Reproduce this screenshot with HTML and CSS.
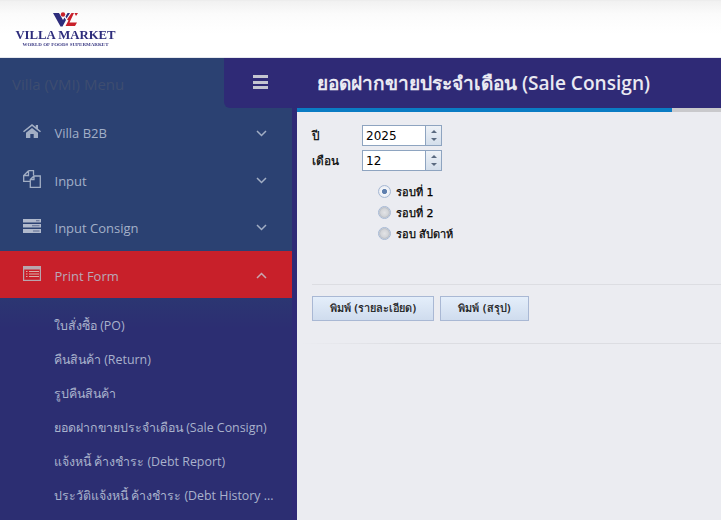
FILE: index.html
```html
<!DOCTYPE html>
<html lang="th">
<head>
<meta charset="utf-8">
<title>Sale Consign</title>
<link rel="stylesheet" href="styles.css">
</head>
<body>
<header class="top">
  <div class="logo">
    <svg class="logo-mark" width="26" height="15" viewBox="0 0 26 15">
      <path fill="#2e2d7c" d="M0 1h6l4 7 1.500-2.500L13 8l-3.500 6.500h-2z"/>
      <circle cx="10" cy="2.500" r="2.200" fill="#c8202a"/>
      <path fill="#c8202a" d="M14 7.500 18.500 1H21l-4.500 9.500H24l-2 3.500H12.500l3-5.500zM21.500 1H25l-2 3z"/>
      <path fill="#2e2d7c" d="M14.500 1h2.500l-3.500 5.500-1-2z"/>
    </svg>
    <div class="logo-name">VILLA MARKET</div>
    <div class="logo-tag">WORLD OF FOODS SUPERMARKET</div>
  </div>
</header>
<div class="shell">
  <aside class="side">
    <div class="side-head">
      <span class="side-title">Villa (VMI) Menu</span>
      <button class="toggle" aria-label="menu"><span></span><span></span><span></span></button>
    </div>
    <nav class="nav">
      <a class="nav-item n1">
        <svg class="nav-icon" width="18" height="14" viewBox="0 0 18 14"><path fill="#a2aec4" d="M9 0 0 7.200l1 1.100L9 1.900l8 6.400 1-1.100-3-2.400V1h-2.200v2L9 0zM3 8.800V14h4.300v-4h3.400v4H15V8.800L9 4z"/></svg>
        <span class="nav-label">Villa B2B</span>
        <svg class="chev" width="11" height="7" viewBox="0 0 11 7"><path fill="none" stroke="#a2aec4" stroke-width="1.500" d="m1 1 4.500 4.500L10 1"/></svg>
      </a>
      <a class="nav-item n2">
        <svg class="nav-icon" width="18" height="18" viewBox="0 0 18 18"><path fill="none" stroke="#a2aec4" stroke-width="1.300" d="M5.500.7h5v4.600M5.500.7 .7 5.500v5.800h6.600M5.500.7v4.800H.7M7.300 9.500 11 6h6.300v11.300H7.300zM11 6v3.500H7.300"/></svg>
        <span class="nav-label">Input</span>
        <svg class="chev" width="11" height="7" viewBox="0 0 11 7"><path fill="none" stroke="#a2aec4" stroke-width="1.500" d="m1 1 4.500 4.500L10 1"/></svg>
      </a>
      <a class="nav-item n3">
        <svg class="nav-icon" width="18" height="14" viewBox="0 0 18 14"><path fill="#b0b9cc" d="M0 0h18v3.600H0zM0 5h18v3.600H0zM0 10h18v4H0z"/><path fill="#5d6c92" d="M13 1.200h3.500v1H13zM9 6.300h7.500v1H9zM10 11.500h6.500v1H10z"/></svg>
        <span class="nav-label">Input Consign</span>
        <svg class="chev" width="11" height="7" viewBox="0 0 11 7"><path fill="none" stroke="#a2aec4" stroke-width="1.500" d="m1 1 4.500 4.500L10 1"/></svg>
      </a>
      <a class="nav-item active">
        <svg class="nav-icon" width="18" height="15" viewBox="0 0 18 15"><path fill="#b9a6ae" d="M0 0h18v15H0z"/><path fill="#c8202a" d="M1.200 3.500h15.600v10.300H1.200z"/><path fill="#d8b0a8" d="M3 5h1.500v1H3zM6 5h10v1H6zM3 7.500h1.500v1H3zM6 7.500h10v1H6zM3 10h1.500v1H3zM6 10h10v1H6z"/></svg>
        <span class="nav-label">Print Form</span>
        <svg class="chev" width="11" height="7" viewBox="0 0 11 7"><path fill="none" stroke="#c7a8b0" stroke-width="1.500" d="m1 6 4.500-4.500L10 6"/></svg>
      </a>
      <ul class="sub">
        <li>ใบสั่งซื้อ (PO)</li>
        <li>คืนสินค้า (Return)</li>
        <li>รูปคืนสินค้า</li>
        <li>ยอดฝากขายประจำเดือน (Sale Consign)</li>
        <li>แจ้งหนี้ ค้างชำระ (Debt Report)</li>
        <li>ประวัติแจ้งหนี้ ค้างชำระ (Debt History ...</li>
      </ul>
    </nav>
  </aside>
  <main class="main">
    <div class="title-bar"><h1 class="title">ยอดฝากขายประจำเดือน (Sale Consign)</h1></div>
    <div class="progress"><div class="progress-fill"></div></div>
    <form class="form">
      <div class="fields">
        <label class="field-label">ปี</label>
        <div class="spin"><span class="spin-value">2025</span><span class="spin-btns"><i class="up"></i><i class="down"></i></span></div>
        <label class="field-label">เดือน</label>
        <div class="spin"><span class="spin-value">12</span><span class="spin-btns"><i class="up"></i><i class="down"></i></span></div>
      </div>
      <div class="radios">
        <div class="radio-row"><span class="radio checked"></span>รอบที่ 1</div>
        <div class="radio-row"><span class="radio"></span>รอบที่ 2</div>
        <div class="radio-row"><span class="radio"></span>รอบ สัปดาห์</div>
      </div>
      <div class="actions">
        <button type="button" class="btn btn-detail">พิมพ์ (รายละเอียด)</button>
        <button type="button" class="btn btn-sum">พิมพ์ (สรุป)</button>
      </div>
      <div class="end-rule"></div>
    </form>
  </main>
</div>
</body>
</html>
```
FILE: styles.css
```css
* { box-sizing: border-box; }
html, body { margin: 0; height: 100%; overflow: hidden; }
body { width: 721px; height: 520px; display: flex; flex-direction: column; font-family: "Open Sans", "Noto Sans", sans-serif; background: #ebecf1; }

.top { height: 58px; flex: none; padding: 10px 0 0 16px; background: linear-gradient(#e9e9e9 0, #f1f1f1 1px, #fbfbfb 14px, #fff 34px); border-bottom: 1px solid #e6e8ee; }
.logo { width: 99px; display: flex; flex-direction: column; align-items: center; filter: blur(.35px); }
.logo-mark { display: block; margin: 2px 0 0 0; }
.logo-name { font: bold 12.750px/11px "Liberation Serif", serif; color: #2e2d7c; white-space: nowrap; margin-top: 3px; }
.logo-tag { font: bold 5px/5px "Liberation Serif", serif; color: #3d3c85; white-space: nowrap; margin-top: 1px; }

.shell { flex: 1; display: flex; min-height: 0; }

.side { width: 297px; flex: none; border-right: 5px solid #2f2a76; background: linear-gradient(#2b4172 0, #2b4172 200px, #2c2e72 270px); }
.side-head { height: 50px; margin-right: -5px; display: flex; align-items: center; justify-content: space-between; padding-left: 12px; }
.side-title { font-size: 15px; color: #3e4d70; margin-top: 2px; }
.toggle { width: 73px; height: 50px; border: 0; padding: 0 0 2px; background: #2f2a76; border-radius: 0 0 4px 6px; display: flex; flex-direction: column; align-items: center; justify-content: center; gap: 2.500px; }
.toggle span { display: block; width: 15px; height: 3px; background: #c4c5d0; }

.nav { display: flex; flex-direction: column; }
.nav-item { display: flex; align-items: center; height: 47px; color: #a3b0c8; font-size: 13px; padding: 0 23px; }
.nav-icon { flex: none; margin-top: -4px; }
.nav-label { margin-left: 13.500px; flex: 1; }
.n1 { height: 49px; padding-top: 1px; }
.active { padding-top: 2px; background: #c8202a; color: #b9a9b8; }
.chev { flex: none; margin-right: 2px; }

.sub { list-style: none; margin: 11px 0 0; padding: 0; }
.sub li { height: 34px; line-height: 34px; padding-left: 54px; font-size: 12.400px; color: #a9b2cc; white-space: nowrap; }

.main { flex: 1; min-width: 0; display: flex; flex-direction: column; }
.title-bar { height: 50px; flex: none; background: #2f2a76; padding-left: 20px; display: flex; align-items: center; }
.title { margin: 0; font-size: 19.100px; font-weight: 600; color: #e9e9f2; white-space: nowrap; }
.progress { height: 4px; flex: none; background: #c9c9cc; }
.progress-fill { width: 375px; height: 4px; background: #0a7cc4; }

.form { padding: 13px 0 0 15px; font-family: "DejaVu Sans", sans-serif; font-size: 11px; color: #000; }
.fields { display: grid; grid-template-columns: 50px 80px; row-gap: 4px; align-items: center; }
.field-label { font-size: 11.800px; -webkit-text-stroke: .25px #000; }
.spin { height: 21px; display: flex; border: 1px solid #8ea4c0; background: #fff; }
.spin-value { flex: 1; padding: 1px 0 0 3px; line-height: 19px; font-size: 12px; }
.spin-btns { width: 16px; border-left: 1px solid #8ea4c0; background: linear-gradient(#eef2f7, #d3deeb); display: flex; flex-direction: column; align-items: center; justify-content: center; gap: 5px; }
.spin-btns i { display: block; width: 0; height: 0; border-left: 3px solid transparent; border-right: 3px solid transparent; }
.up { border-bottom: 3px solid #5a6a80; }
.down { border-top: 3px solid #5a6a80; }

.radios { margin: 14px 0 0 66px; display: flex; flex-direction: column; gap: 8px; }
.radio-row { height: 13px; display: flex; align-items: center; gap: 5px; font-size: 11px; white-space: nowrap; -webkit-text-stroke: .25px #000; }
.radio { flex: none; width: 13px; height: 13px; border-radius: 50%; border: 1px solid #a6b8d4; background: radial-gradient(circle, #e2e3e6 0, #d2d4d8 50%, #b9bec6 62%, #eef1f6 78%); }
.checked { background: radial-gradient(circle, #5f7fae 0, #5f7fae 28%, #f4f6fa 38%, #dfe4ec 100%); }

.actions { margin: 44px 0 0; padding-top: 11px; border-top: 1px solid #dcdde2; display: flex; gap: 6px; }
.btn { height: 25px; padding: 0; border: 1px solid #a9b8d4; background: linear-gradient(#e4eefa, #cfdcee); font: 400 10.800px "DejaVu Sans", sans-serif; color: #111; -webkit-text-stroke: .2px #111; }
.btn-detail { width: 122px; }
.btn-sum { width: 89px; }
.end-rule { height: 1px; margin: 22px 0 0 -12px; background: linear-gradient(90deg, #ebecf1, #dcdde2 25%); }
```
